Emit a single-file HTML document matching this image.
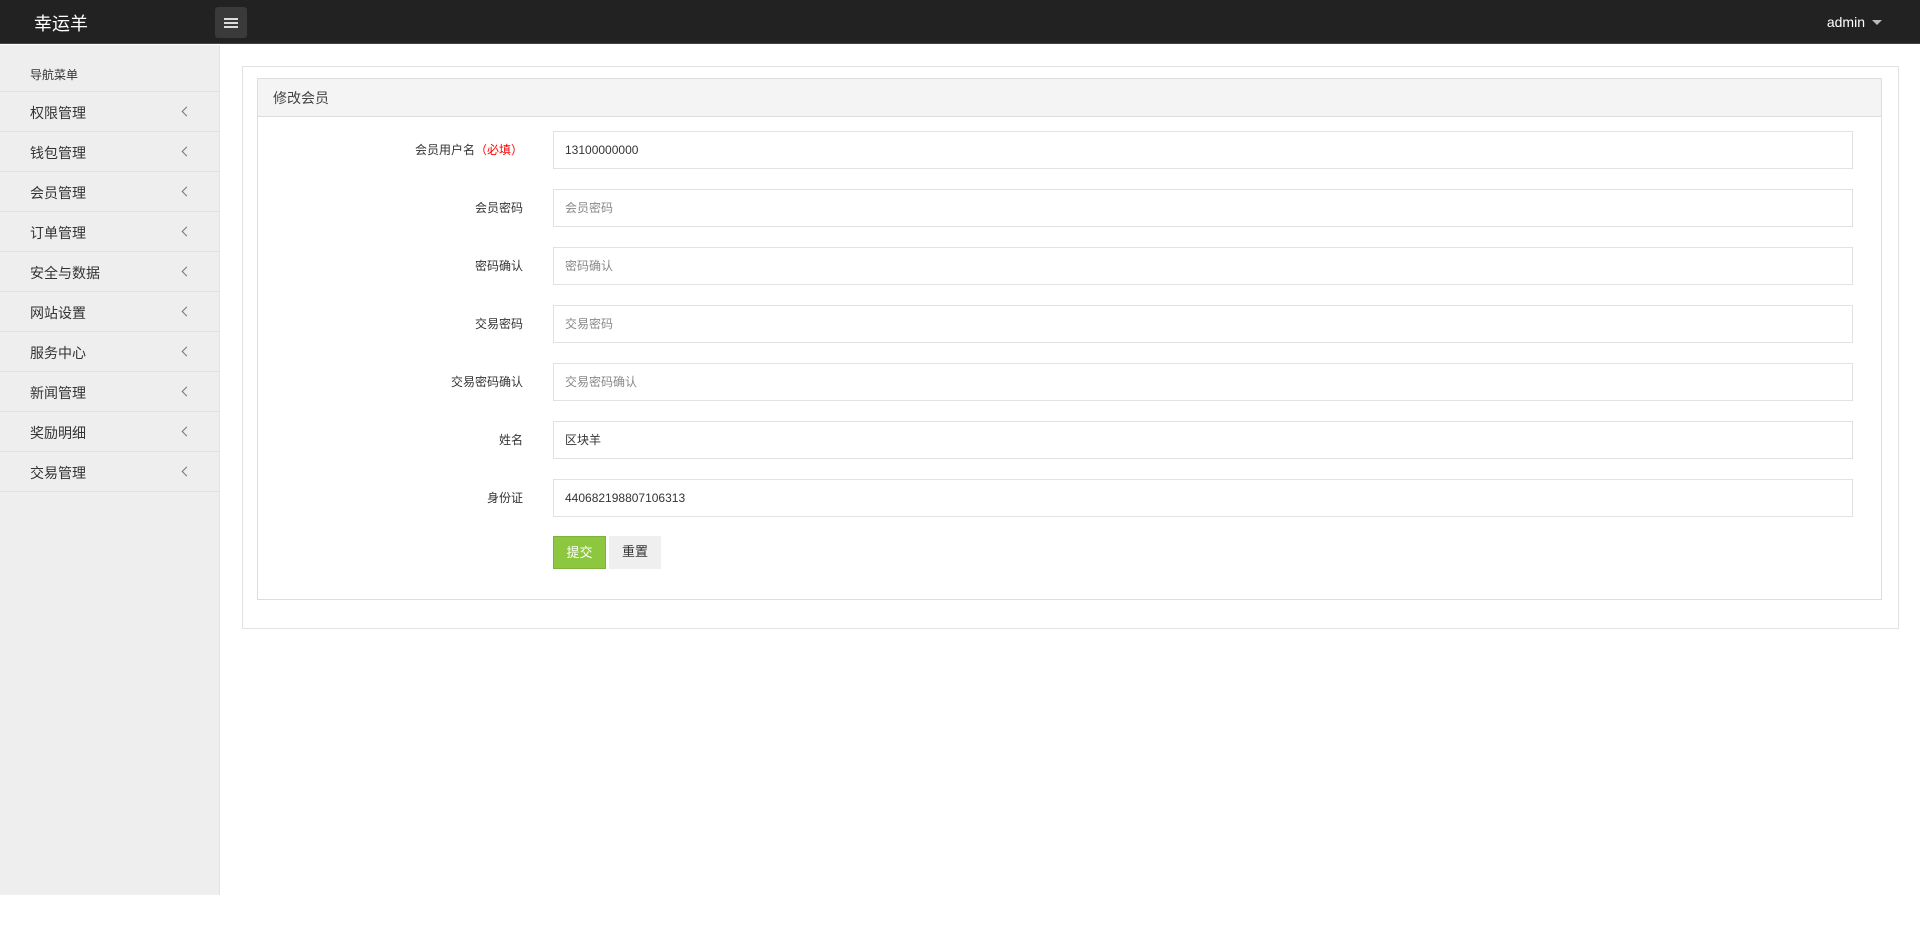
<!DOCTYPE html>
<html><head><meta charset="utf-8"><style>
*{box-sizing:border-box;margin:0;padding:0}
body{width:1920px;height:935px;background:#fff;font-family:"Liberation Sans","Noto Sans CJK SC",sans-serif;color:#333;position:relative;overflow:hidden}
.hdr{position:absolute;left:0;top:0;width:1920px;height:44px;background:#222;border-bottom:1px solid #444}
.logo{position:absolute;left:34px;top:10px;color:#fff;font-size:18px}
.tog{position:absolute;left:215px;top:7px;width:32px;height:31px;background:#3a3a3a;border-radius:3px}
.tog i{position:absolute;left:9px;width:14px;height:1.5px;background:#ddd}
.adm{position:absolute;right:55px;top:14px;color:#fff;font-size:14px}
.adm:after{content:"";position:absolute;right:-17px;top:6px;border:5px solid transparent;border-top:5px solid #bbb}
.side{position:absolute;left:0;top:45px;width:220px;height:850px;background:#eee;border-right:1px solid #e2e2e2}
.nt{height:47px;padding:21px 0 0 30px;font-size:12px;border-bottom:1px solid #e2e2e2}
.it{height:40px;line-height:42px;padding-left:30px;font-size:14px;border-bottom:1px solid #e2e2e2;position:relative}
.it:after{content:"";position:absolute;left:183px;top:16px;width:6px;height:6px;border-left:1px solid #777;border-bottom:1px solid #777;transform:rotate(45deg)}
.outer{position:absolute;left:242px;top:66px;width:1657px;height:563px;border:1px solid #e2e2e2}
.inner{position:absolute;left:257px;top:78px;width:1625px;height:522px;border:1px solid #ddd}
.ph{height:38px;background:#f4f4f4;border-bottom:1px solid #ddd;padding:9px 0 0 15px;font-size:14px;color:#444}
.lb{position:absolute;left:223px;width:300px;text-align:right;font-size:12px}
.lb span{color:#f00}
.in{position:absolute;left:553px;width:1300px;height:38px;border:1px solid #e2e2e2;font-size:12px;line-height:36px;padding-left:11px}
.in.p{color:#888}
.b{position:absolute;top:536px;height:33px;font-size:13px;line-height:32px;text-align:center}
</style></head><body>
<div class="hdr"><div class="logo">幸运羊</div><div class="tog"><i style="top:11px"></i><i style="top:15px"></i><i style="top:19px"></i></div><div class="adm">admin</div></div>
<div class="side"><div class="nt">导航菜单</div>
<div class="it">权限管理</div><div class="it">钱包管理</div><div class="it">会员管理</div><div class="it">订单管理</div><div class="it">安全与数据</div><div class="it">网站设置</div><div class="it">服务中心</div><div class="it">新闻管理</div><div class="it">奖励明细</div><div class="it">交易管理</div></div>
<div class="outer"></div>
<div class="inner"><div class="ph">修改会员</div></div>
<div class="lb" style="top:141px">会员用户名<span>（必填）</span></div><div class="in" style="top:131px">13100000000</div>
<div class="lb" style="top:199px">会员密码</div><div class="in p" style="top:189px">会员密码</div>
<div class="lb" style="top:257px">密码确认</div><div class="in p" style="top:247px">密码确认</div>
<div class="lb" style="top:315px">交易密码</div><div class="in p" style="top:305px">交易密码</div>
<div class="lb" style="top:373px">交易密码确认</div><div class="in p" style="top:363px">交易密码确认</div>
<div class="lb" style="top:431px">姓名</div><div class="in" style="top:421px">区块羊</div>
<div class="lb" style="top:489px">身份证</div><div class="in" style="top:479px">440682198807106313</div>
<div class="b" style="left:553px;width:53px;background:#8dc63f;border:1px solid #7cb33a;color:#fff">提交</div>
<div class="b" style="left:609px;width:52px;background:#efefef;color:#333">重置</div>
</body></html>
